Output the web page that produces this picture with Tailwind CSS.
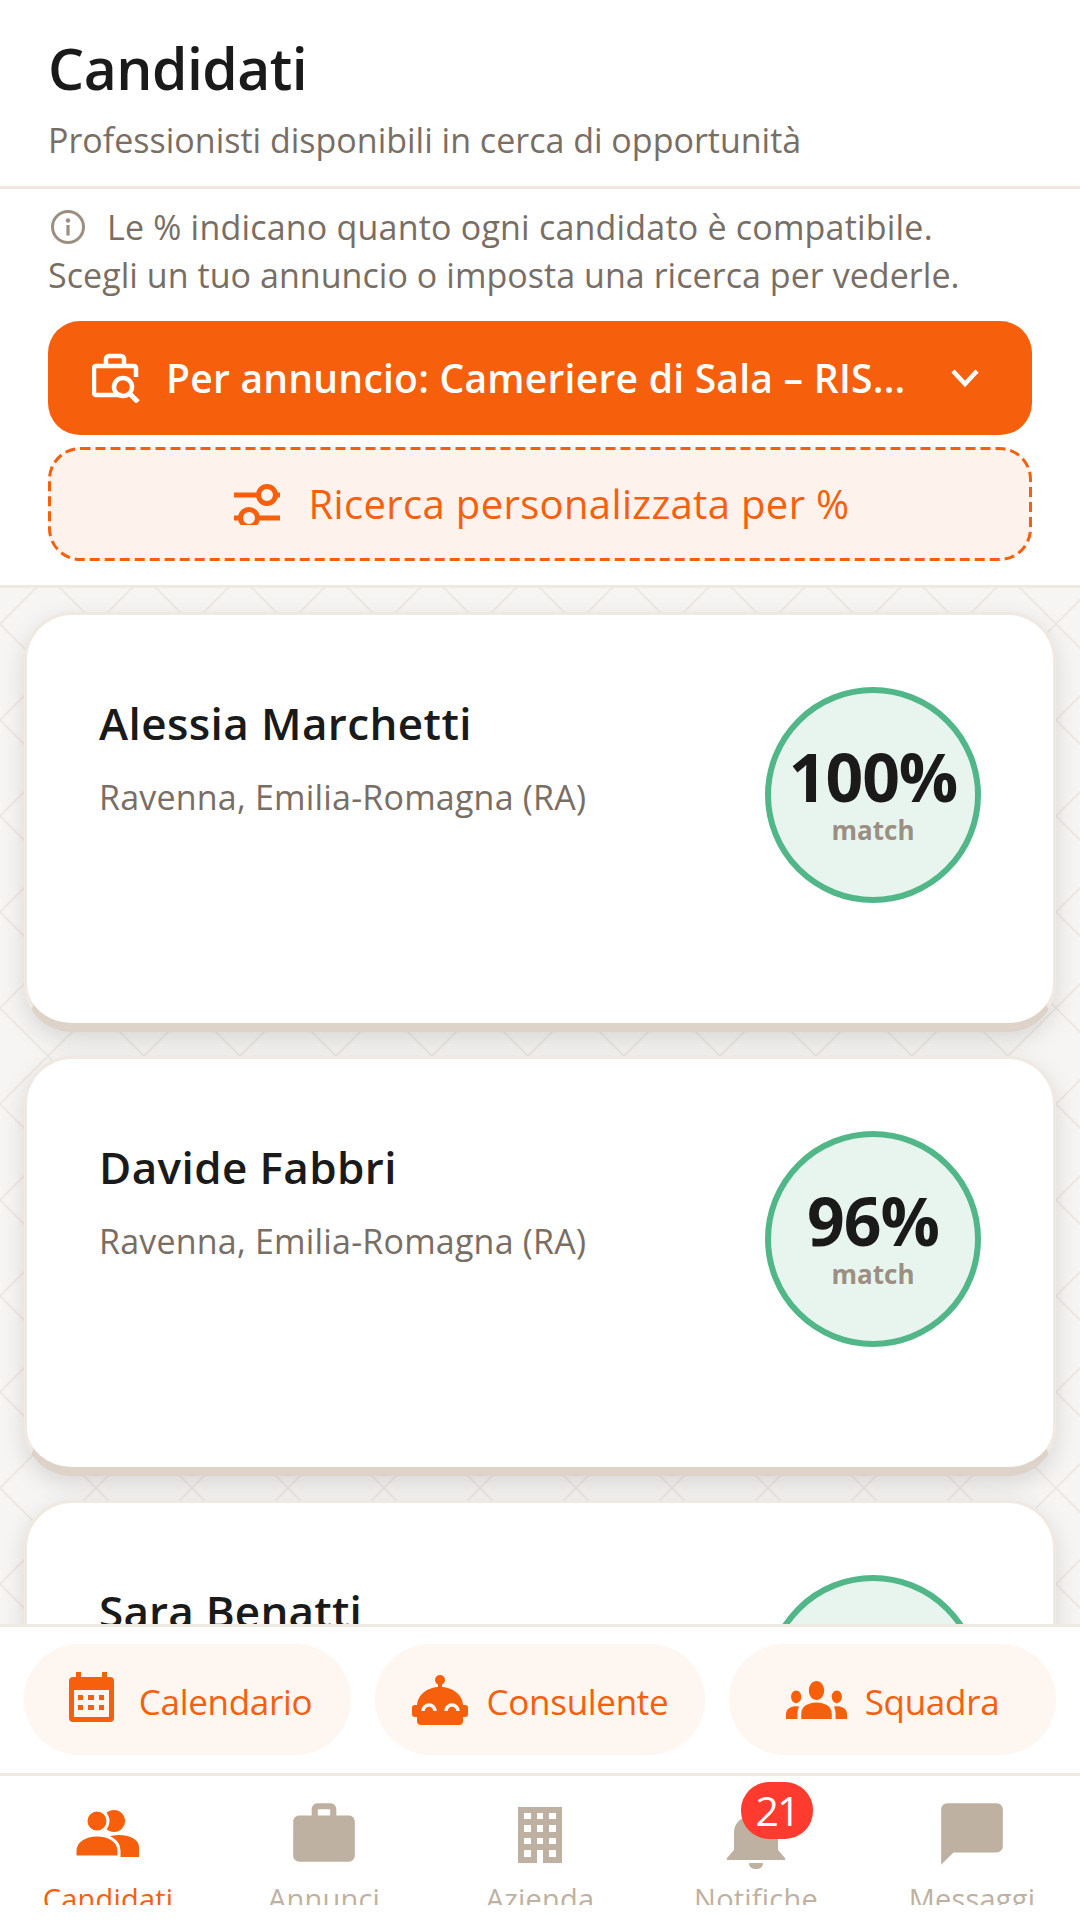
<!DOCTYPE html>
<html lang="it"><head><meta charset="utf-8">
<script src="https://cdn.jsdelivr.net/npm/@tailwindcss/browser@4"></script>
</head>
<body class="bg-white">
<div class="w-[1080px] h-[1920px] flex flex-col overflow-hidden bg-white font-['Open_Sans','Noto_Sans',sans-serif] text-[#1a1a1a]">
  <header class="h-[189px] shrink-0 border-b-[3px] border-[#efe9e1] px-12 pt-[33px]">
    <h1 class="text-[57px] leading-[70px] font-semibold tracking-[-0.5px]">Candidati</h1>
    <p class="mt-[13px] text-[34px] leading-[48px] text-[#786e64]">Professionisti disponibili in cerca di opportunità</p>
  </header>
  <section class="h-[399px] shrink-0 border-b-[3px] border-[#efe9e1] px-12 pt-[14px]">
    <div class="text-[34px] leading-[48px] text-[#786e64]">
      <div class="flex items-center gap-[22px]">
        <svg class="ml-[3px] shrink-0" width="34" height="34" viewBox="0 0 34 34" fill="none"><circle cx="17" cy="17" r="15.5" stroke="#9c8f82" stroke-width="3"/><circle cx="17" cy="10.5" r="2.2" fill="#9c8f82"/><rect x="15.4" y="15" width="3.2" height="10.5" fill="#9c8f82"/></svg>
        <span class="tracking-[0.2px]">Le % indicano quanto ogni candidato è compatibile.</span>
      </div>
      <div class="tracking-[0.05px]">Scegli un tuo annuncio o imposta una ricerca per vederle.</div>
    </div>
    <button class="mt-[22px] w-full h-[114px] rounded-[32px] bg-[#f6600c] text-white flex items-center pl-[44px] pr-[52px]">
      <svg class="shrink-0" width="48" height="50" viewBox="0 0 48 50" fill="none" stroke="white" stroke-width="4.5"><path d="M30 42H4a2 2 0 0 1-2-2V15a2 2 0 0 1 2-2h38a2 2 0 0 1 2 2v9"/><path d="M14 13V6a3 3 0 0 1 3-3h12a3 3 0 0 1 3 3v7"/><circle cx="31" cy="34" r="9"/><path d="M38 41l8 8" stroke-width="5"/></svg>
      <span class="ml-[26px] text-[39px] font-semibold tracking-[0.25px] whitespace-nowrap flex-1 text-left">Per annuncio: Cameriere di Sala – RIS...</span>
      <svg class="shrink-0" width="30" height="20" viewBox="0 0 30 20" fill="none" stroke="white" stroke-width="4.5"><path d="M3 3l12 13L27 3"/></svg>
    </button>
    <button class="relative mt-[12px] w-full h-[114px] pl-[4px] rounded-[32px] bg-[#fdf2ec] text-[#f6600c] flex items-center justify-center gap-[28px]">
      <svg class="absolute inset-0" width="984" height="114" fill="none"><rect x="1.5" y="1.5" width="981" height="111" rx="31" stroke="#f6600c" stroke-width="3" stroke-dasharray="10 5"/></svg>
      <svg class="relative" width="46" height="42" viewBox="0 0 46 42" fill="none" stroke="#f6600c" stroke-width="5"><path d="M0 12h24M42 12h4M0 35h6M24 35h22"/><circle cx="33" cy="12" r="8.5"/><circle cx="15" cy="35" r="8.5"/></svg>
      <span class="relative text-[40px] font-medium tracking-[0.35px]">Ricerca personalizzata per %</span>
    </button>
  </section>
  <main class="relative flex-1 min-h-0 overflow-hidden bg-[#f6f5f3]">
    <svg class="absolute inset-0" width="1080" height="1036"><defs><pattern id="lat" width="96" height="96" patternUnits="userSpaceOnUse" y="36"><path d="M-48 48L48-48M0 96L96 0M48 144L144 48M-48 48L48 144M0 0L96 96M48-48L144 48" stroke="#ebe7e1" stroke-width="1.6" fill="none"/></pattern></defs><rect width="1080" height="1036" fill="url(#lat)"/></svg>
    <div class="relative px-6 pt-6 flex flex-col gap-6">
      <article class="shrink-0 h-[420px] rounded-[48px] bg-white border-[3px] border-[#efe9e1] border-b-[9px] border-b-[#ddd3c9] shadow-[0_8px_24px_rgba(0,0,0,0.12)] pl-[72px] pr-[72px] pt-[78px] flex justify-between items-start">
        <div><h2 class="text-[44px] leading-[60px] font-semibold tracking-[0.4px]">Alessia Marchetti</h2><p class="mt-[20px] text-[34px] leading-[48px] text-[#786e64] tracking-[0.2px]">Ravenna, Emilia-Romagna (RA)</p></div>
        <div class="w-[216px] h-[216px] shrink-0 -mt-[6px] rounded-full border-[6px] border-[#52b788] bg-[#e8f5ee] flex flex-col items-center justify-center"><span class="text-[66px] leading-[66px] font-bold mt-[-2px] tracking-[-1px]">100%</span><span class="text-[26px] leading-[30px] font-bold text-[#9c8f82] mt-[6px]">match</span></div>
      </article>
      <article class="shrink-0 h-[420px] rounded-[48px] bg-white border-[3px] border-[#efe9e1] border-b-[9px] border-b-[#ddd3c9] shadow-[0_8px_24px_rgba(0,0,0,0.12)] pl-[72px] pr-[72px] pt-[78px] flex justify-between items-start">
        <div><h2 class="text-[44px] leading-[60px] font-semibold tracking-[0.4px]">Davide Fabbri</h2><p class="mt-[20px] text-[34px] leading-[48px] text-[#786e64] tracking-[0.2px]">Ravenna, Emilia-Romagna (RA)</p></div>
        <div class="w-[216px] h-[216px] shrink-0 -mt-[6px] rounded-full border-[6px] border-[#52b788] bg-[#e8f5ee] flex flex-col items-center justify-center"><span class="text-[66px] leading-[66px] font-bold mt-[-2px] tracking-[-1px]">96%</span><span class="text-[26px] leading-[30px] font-bold text-[#9c8f82] mt-[6px]">match</span></div>
      </article>
      <article class="shrink-0 h-[420px] rounded-[48px] bg-white border-[3px] border-[#efe9e1] border-b-[9px] border-b-[#ddd3c9] shadow-[0_8px_24px_rgba(0,0,0,0.12)] pl-[72px] pr-[72px] pt-[78px] flex justify-between items-start">
        <div><h2 class="text-[44px] leading-[60px] font-semibold tracking-[0.2px]">Sara Benatti</h2></div>
        <div class="w-[216px] h-[216px] shrink-0 -mt-[6px] rounded-full border-[6px] border-[#52b788] bg-[#e8f5ee]"></div>
      </article>
    </div>
  </main>
  <div class="h-[152px] shrink-0 border-t-[3px] border-b-[3px] border-[#efe9e1] bg-white px-6 pt-[17px] flex gap-6 relative">
    <a class="w-[327px] shrink-0 h-[111px] pl-[6px] rounded-full bg-[#fef6f1] text-[#f6600c] flex items-center justify-center gap-[25px]">
      <svg class="-mt-[5px]" width="45" height="50" viewBox="0 0 45 50" fill="#f6600c"><path fill-rule="evenodd" d="M7 0h5v5h21V0h5v5h3a4 4 0 0 1 4 4v37a4 4 0 0 1-4 4H4a4 4 0 0 1-4-4V9a4 4 0 0 1 4-4h3zM5 18v27h35V18z"/><path d="M9 23h5v5H9zM19 23h6v5h-6zM30 23h5v5h-5zM9 33h5v5H9zM19 33h6v5h-6zM30 33h5v5h-5z"/></svg>
      <span class="pt-[6px] text-[35px] font-medium tracking-[-0.3px]">Calendario</span>
    </a>
    <a class="w-[330px] shrink-0 h-[111px] rounded-full bg-[#fef6f1] text-[#f6600c] flex items-center justify-center gap-[19px]">
      <svg width="56" height="50" viewBox="0 0 56 50" fill="#f6600c"><circle cx="28" cy="5" r="5"/><rect x="26" y="6" width="4" height="10"/><path d="M5 31C5 20 15 12 28 12s23 8 23 19v15a4 4 0 0 1-4 4H9a4 4 0 0 1-4-4z"/><rect x="0" y="30" width="56" height="12" rx="3"/><path d="M11 36a6 6 0 0 1 12 0M34 36a6 6 0 0 1 12 0" fill="none" stroke="#fef6f1" stroke-width="3.5"/></svg>
      <span class="pt-[6px] text-[35px] font-medium tracking-[-0.3px]">Consulente</span>
    </a>
    <a class="w-[327px] shrink-0 h-[111px] rounded-full bg-[#fef6f1] text-[#f6600c] flex items-center justify-center gap-[18px]">
      <svg width="61" height="38" viewBox="0 6 24 12" preserveAspectRatio="none" fill="#f6600c"><path d="M12 12.75c1.63 0 3.07.39 4.24.9 1.08.48 1.76 1.56 1.76 2.73V18H6v-1.61c0-1.18.68-2.26 1.76-2.73 1.17-.52 2.61-.91 4.24-.91zM4 13c1.1 0 2-.9 2-2s-.9-2-2-2-2 .9-2 2 .9 2 2 2zm1.13 1.1c-.37-.06-.74-.1-1.13-.1-.99 0-1.93.21-2.78.58C.48 14.9 0 15.62 0 16.43V18h4.5v-1.61c0-.83.23-1.61.63-2.29zM20 13c1.1 0 2-.9 2-2s-.9-2-2-2-2 .9-2 2 .9 2 2 2zm4 3.43c0-.81-.48-1.53-1.22-1.85-.85-.37-1.79-.58-2.78-.58-.39 0-.76.04-1.13.1.4.68.63 1.46.63 2.29V18H24v-1.57zM12 6c1.66 0 3 1.34 3 3s-1.34 3-3 3-3-1.34-3-3 1.34-3 3-3z"/></svg>
      <span class="pt-[6px] text-[35px] font-medium tracking-[-0.3px]">Squadra</span>
    </a>
  </div>
  <nav class="h-[144px] shrink-0 bg-white">
    <div class="h-[129px] overflow-hidden grid grid-cols-5 text-[29px] leading-[36px] font-medium text-[#bfb1a1] tracking-[0.2px]">
      <a class="flex flex-col items-center pt-[21px] text-[#f6600c]">
        <svg width="74" height="74" viewBox="0 0 74 74" fill="#f6600c"><circle cx="43" cy="24" r="11"/><path d="M30 60V50c0-8 10-12 20-12s20 4 20 12v10z" transform="translate(-2 0)"/><circle cx="26" cy="24" r="11" stroke="white" stroke-width="3"/><path d="M6 60v-6c0-10 10-16 22-16s22 6 22 16v6z" transform="translate(-2 0)" stroke="white" stroke-width="3"/></svg>
        <span class="mt-[10px]">Candidati</span>
      </a>
      <a class="flex flex-col items-center pt-[21px]">
        <svg width="74" height="74" viewBox="0 0 24 24" fill="#bfb1a1"><path d="M20 6h-4V4c0-1.11-.89-2-2-2h-4c-1.11 0-2 .89-2 2v2H4c-1.11 0-1.99.89-1.99 2L2 19c0 1.11.89 2 2 2h16c1.11 0 2-.89 2-2V8c0-1.11-.89-2-2-2zm-6 0h-4V4h4v2z"/></svg>
        <span class="mt-[10px]">Annunci</span>
      </a>
      <a class="flex flex-col items-center pt-[21px]">
        <svg width="74" height="74" viewBox="0 0 74 74" fill="#bfb1a1"><path fill-rule="evenodd" d="M15 10h44v56H40V53h-6v13H15zM21 16v6h7v-6zM34 16v6h6v-6zM46 16v6h7v-6zM21 28v7h7v-7zM34 28v7h6v-7zM46 28v7h7v-7zM21 41v6h7v-6zM34 41v6h6v-6zM46 41v6h7v-6zM21 53v7h7v-7zM46 53v7h7v-7z"/></svg>
        <span class="mt-[10px]">Azienda</span>
      </a>
      <a class="relative flex flex-col items-center pt-[21px]">
        <svg width="74" height="74" viewBox="0 0 74 74" fill="#bfb1a1"><path d="M8 63v-2l7-8V35c0-10 9-17 22-17s22 7 22 17v18l7 8v2z"/><path d="M30 66h14c0 4-3 6-7 6s-7-2-7-6z"/></svg>
        <span class="mt-[10px]">Notifiche</span>
        <span class="absolute left-[93px] top-[6px] w-[72px] h-[57px] rounded-[28px] bg-[#ff3b30] text-white text-[41px] leading-[57px] font-normal text-center tracking-[-2px]">21</span>
      </a>
      <a class="flex flex-col items-center pt-[21px]">
        <svg width="74" height="74" viewBox="0 0 24 24" fill="#bfb1a1"><path d="M20 2H4c-1.1 0-2 .9-2 2v18l4-4h14c1.1 0 2-.9 2-2V4c0-1.1-.9-2-2-2z"/></svg>
        <span class="mt-[10px]">Messaggi</span>
      </a>
    </div>
  </nav>
</div>
</body></html>
